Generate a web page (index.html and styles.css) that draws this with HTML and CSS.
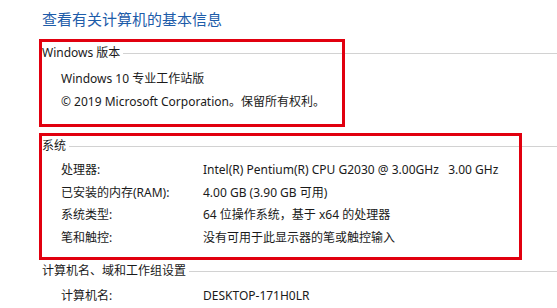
FILE: index.html
```html
<!DOCTYPE html>
<html lang="zh-CN">

<head>
  <meta charset="UTF-8" />
  <title>系统</title>
  <link rel="stylesheet" href="styles.css">
</head>

<body>
  <div class="page">
    <h1 class="title">查看有关计算机的基本信息</h1>

    <!-- Windows 版本 -->
    <div class="sec sec-win">
      <div class="sec-head"><span>Windows 版本</span><i class="rule"></i></div>
      <div class="rows">
        <div class="line">Windows 10 专业工作站版</div>
        <div class="line">© 2019 Microsoft Corporation。保留所有权利。</div>
      </div>
      <div class="mark mark-win"></div>
    </div>

    <!-- 系统 -->
    <div class="sec sec-sys">
      <div class="sec-head"><span>系统</span><i class="rule"></i></div>
      <div class="rows">
        <div class="row"><span class="label">处理器:</span><span>Intel(R) Pentium(R) CPU G2030 @ 3.00GHz&nbsp;&nbsp;&nbsp;3.00 GHz</span></div>
        <div class="row"><span class="label">已安装的内存(RAM):</span><span>4.00 GB (3.90 GB 可用)</span></div>
        <div class="row"><span class="label">系统类型:</span><span>64 位操作系统，基于 x64 的处理器</span></div>
        <div class="row"><span class="label">笔和触控:</span><span>没有可用于此显示器的笔或触控输入</span></div>
      </div>
      <div class="mark mark-sys"></div>
    </div>

    <!-- 计算机名 -->
    <div class="sec sec-name">
      <div class="sec-head"><span>计算机名、域和工作组设置</span><i class="rule"></i></div>
      <div class="rows">
        <div class="row"><span class="label">计算机名:</span><span>DESKTOP-171H0LR</span></div>
      </div>
    </div>
  </div>
</body>

</html>
```

FILE: styles.css
```css
body {
  margin: 0;
  background-color: #fff;
  font-family: "Noto Sans", "Noto Sans CJK SC", sans-serif;
  font-size: 12px;
  color: #1a1a1a;
  overflow: hidden;
}

.page {
  padding-left: 42px;
}

.title {
  margin: 9px 0 0;
  font-size: 15px;
  line-height: 20px;
  font-weight: normal;
  color: #1d5ca9;
}

.sec {
  position: relative;
}

.sec-head {
  display: flex;
  align-items: center;
  height: 18px;
}

.rule {
  flex: 1;
  height: 1px;
  margin: 3px 0 0 3px;
  background-color: #d2d2d2;
}

.rows {
  padding-left: 19px;
}

.line,
.row {
  white-space: nowrap;
}

.row {
  display: flex;
  line-height: 22.5px;
}

.label {
  width: 142px;
}

.sec-win {
  margin-top: 14px;
}

.sec-win .rows {
  margin-top: 6px;
}

.sec-win .line {
  line-height: 23px;
}

.sec-sys {
  margin-top: 23px;
}

.sec-sys .rows {
  margin-top: 5px;
}

.sec-name {
  margin-top: 12px;
}

.sec-name .rows {
  margin-top: 6px;
}

/* red annotation boxes */
.mark {
  position: absolute;
  left: -3px;
  border: 3px solid #e1000f;
}

.mark-win {
  top: -4px;
  width: 300px;
  height: 82px;
}

.mark-sys {
  top: -3px;
  width: 477px;
  height: 121px;
}
```
